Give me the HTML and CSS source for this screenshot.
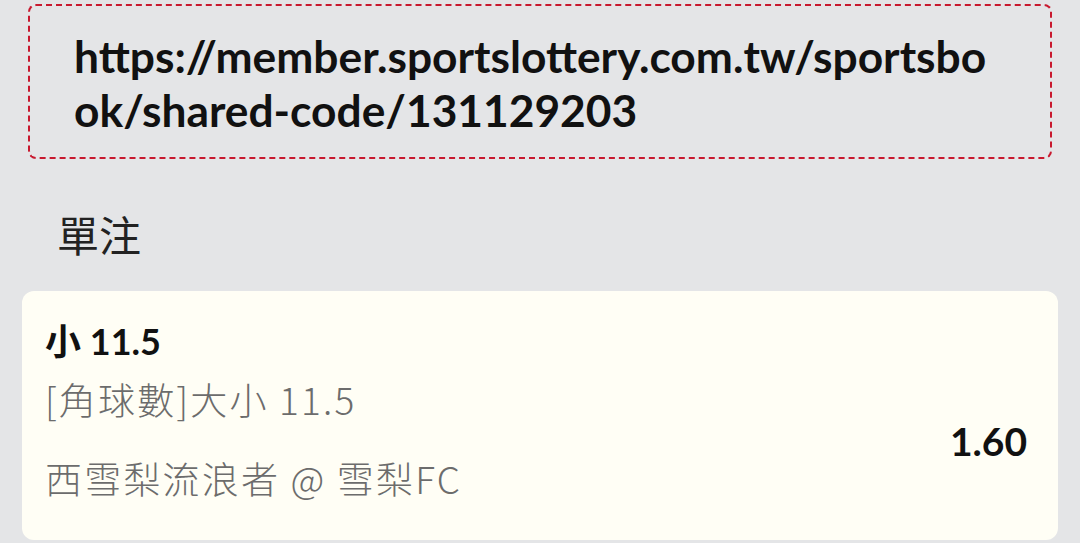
FILE: index.html
```html
<!DOCTYPE html>
<html lang="zh-Hant">
<head>
<meta charset="UTF-8">
<meta name="viewport" content="width=device-width, initial-scale=1.0">
<title>單注分享</title>
<link rel="stylesheet" href="styles.css">
</head>
<body>
<div class="page">
    <div class="share-box">https://member.sportslottery.com.tw/sportsbook/shared-code/131129203</div>
    <h2 class="section-title">單注</h2>
    <div class="bet-card">
        <div class="bet-pick">小 11.5</div>
        <div class="bet-row">
            <div class="bet-info">
                <div class="bet-market">[角球數]大小 11.5</div>
                <div class="bet-match">西雪梨流浪者 @ 雪梨FC</div>
            </div>
            <div class="bet-odds">1.60</div>
        </div>
    </div>
</div>
</body>
</html>
```

FILE: styles.css
```css
body {
    margin: 0;
    background-color: #e4e5e7;
    font-family: Lato, "Noto Sans CJK TC", sans-serif;
    color: #111;
}
.page {
    padding: 4px 22px 0;
}
.share-box {
    margin: 0 6px;
    border: 2px dashed #c8192f;
    border-radius: 8px;
    padding: 23px 50px 20px 44px;
    font-size: 44.3px;
    font-weight: bold;
    line-height: 54px;
    word-break: break-all;
}
.section-title {
    margin: 50px 0 32px 35px;
    font-family: "Noto Sans CJK TC", sans-serif;
    font-size: 42px;
    font-weight: normal;
    line-height: 50px;
    color: #222;
}
.bet-card {
    background-color: #fffef5;
    border-radius: 12px;
    padding: 26px 31px 38px 23px;
}
.bet-pick {
    font-size: 36px;
    font-weight: bold;
    line-height: 48px;
}
.bet-row {
    display: flex;
    justify-content: space-between;
    align-items: center;
    margin-top: 10px;
}
.bet-market,
.bet-match {
    font-family: "Noto Sans CJK TC", sans-serif;
    font-size: 37px;
    font-weight: 300;
    letter-spacing: 2.2px;
    color: #6c6c6c;
    line-height: 48px;
}
.bet-match {
    margin-top: 31px;
}
.bet-odds {
    margin-top: 4px;
    font-size: 39px;
    font-weight: bold;
}
```
